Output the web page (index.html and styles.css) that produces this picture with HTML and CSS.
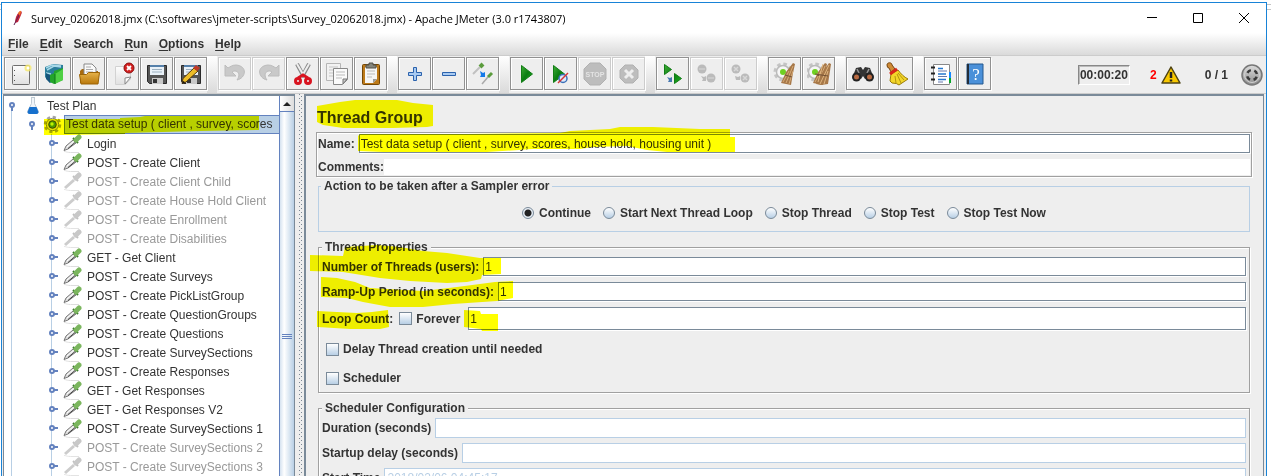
FILE: index.html
```html
<!DOCTYPE html>
<html lang="en">
<head>
<meta charset="utf-8">
<title>Apache JMeter</title>
<link rel="stylesheet" href="styles.css">
<script src="app.js" defer></script>
</head>
<body>
<svg class="defs" width="0" height="0" aria-hidden="true">
  <defs>
    <linearGradient id="green" x1="0" y1="0" x2="1" y2="1"><stop offset="0" stop-color="#3fae35"/><stop offset=".5" stop-color="#0a7d12"/><stop offset="1" stop-color="#1fae22"/></linearGradient>
    <linearGradient id="gold" x1="0" y1="0" x2="0" y2="1"><stop offset="0" stop-color="#e6b24a"/><stop offset="1" stop-color="#b9780b"/></linearGradient>
    <linearGradient id="paper" x1="0" y1="0" x2="0" y2="1"><stop offset="0" stop-color="#fdfdfd"/><stop offset="1" stop-color="#e0e0e0"/></linearGradient>
    <linearGradient id="silver" x1="0" y1="0" x2="0" y2="1"><stop offset="0" stop-color="#dedede"/><stop offset="1" stop-color="#8c8c8c"/></linearGradient>
    <symbol id="i-new" viewBox="0 0 24 24"><rect x="3.500" y="3.500" width="17" height="19" rx="1" fill="url(#paper)" stroke="#6f6f6f"/><path d="M5.500 8v1M5.500 13v1M5.500 18v1" stroke="#555"/><circle cx="19" cy="6" r="3.500" fill="#f6e96b" opacity=".8"/><circle cx="19" cy="6" r="1.500" fill="#fff"/></symbol>
    <symbol id="i-templates" viewBox="0 0 24 24"><path d="M2 5 10 2l10 1v13L7 21 2 15z" fill="#2b7d9b"/><path d="M3 6l6-3 9 1M4 8l7-4 7 1M3 11l5 1" stroke="#a8d8e8" fill="none" stroke-width="1.500"/><path d="M3 11l4 2v8l-4-4z" fill="#16547a"/><path d="M7 13l4-2v-2l9-3v12l-9 4-4-2z" fill="#23a52b"/><path d="M12 12l8-5v11l-8 4z" fill="#4fd044"/><path d="M12 12v10" stroke="#0d7416"/></symbol>
    <symbol id="i-open" viewBox="0 0 24 24"><path d="M3 9l2-2h5l1 2h10v12H3z" fill="#a86b10"/><path d="M7 14V2h8l4 4v8z" fill="#fafafa" stroke="#888"/><path d="M9 5h5M9 7.500h7M9 10h7" stroke="#aaa"/><path d="M2.500 12.500h7l2-2h11l-1.500 11.500h-17z" fill="url(#gold)" stroke="#9c6406"/></symbol>
    <symbol id="i-close" viewBox="0 0 24 24"><path d="M4.500 4.500h15V17l-5 5.500h-10z" fill="url(#paper)" stroke="#d2d2d2"/><path d="M20 15l-6 1v6z" fill="#fff" stroke="#888"/><circle cx="18" cy="6" r="5" fill="#d32020" stroke="#8c0d0d"/><path d="M16 4l4 4m0-4l-4 4" stroke="#fff" stroke-width="1.800"/></symbol>
    <symbol id="i-save" viewBox="0 0 24 24"><path d="M2.500 3.500h19v18h-17l-2-2z" fill="#555" stroke="#292929"/><path d="M5 3h14v10H5z" fill="#e9f1f8"/><path d="M5 3h14v2H5z" fill="#5580aa"/><path d="M7 7.500h10M7 10h10" stroke="#9db1c0"/><path d="M7 16h11v6H7z" fill="#c9c9c9"/><path d="M8 17h4v4H8z" fill="#333"/></symbol>
    <symbol id="i-saveas" viewBox="0 0 24 24"><use href="#i-save"/><path d="M3 21.500l1-5L15 6l4 3L7 20z" fill="#edbd28" stroke="#52360c"/><path d="M14 6l3-3 4 3-3 3z" fill="#be3828"/><path d="M3 22l1-3 2 1z" fill="#111"/></symbol>
    <symbol id="i-undo" viewBox="0 0 24 24"><path d="M2 3v11h11L9 10c4-3 10 1 5 8 9-2 11-14-1-15-4 0-6 2-8 3z" fill="#c9c9c9" stroke="#bcbcbc"/></symbol>
    <symbol id="i-redo" viewBox="0 0 24 24"><use href="#i-undo" transform="matrix(-1 0 0 1 24 0)"/></symbol>
    <symbol id="i-cut" viewBox="0 0 24 24"><path d="M6 2l7 13M18 2l-7 13" stroke="#888" stroke-width="4"/><path d="M6 2l7 12M18 2l-7 12" stroke="#eee" stroke-width="2"/><circle cx="7" cy="19" r="2.500" fill="none" stroke="#d91420" stroke-width="3"/><circle cx="17" cy="19" r="2.500" fill="none" stroke="#d91420" stroke-width="3"/><path d="M7 16l5-3 5 3" fill="none" stroke="#d91420" stroke-width="3"/></symbol>
    <symbol id="i-copy" viewBox="0 0 24 24"><path d="M1.500 1.500h14v17h-14z" fill="#f2f2f2" stroke="#b5b5b5"/><path d="M4 5h9M4 8h9M4 11h5M4 14h4" stroke="#c5c5c5"/><path d="M8.500 6.500h14v11l-5 5h-9z" fill="#fafafa" stroke="#888"/><path d="M11 10h9M11 13h9M11 16h6" stroke="#bbb"/><path d="M22 17h-4v5z" fill="#ccc" stroke="#777"/></symbol>
    <symbol id="i-paste" viewBox="0 0 24 24"><rect x="3.500" y="2.500" width="17" height="20" rx="1" fill="#bd7a19" stroke="#734607"/><path d="M6 5h12v12l-4 4H6z" fill="#f6f6f6"/><path d="M8 9h8M8 12h8M8 15h5" stroke="#bbb"/><path d="M14 21v-4h4z" fill="#999"/><path d="M7 6V3h3V1h4v2h3v3z" fill="#85857b" stroke="#50504b"/></symbol>
    <symbol id="i-plus" viewBox="0 0 24 24"><path d="M10.500 5.500h3v5h5v3h-5v5h-3v-5h-5v-3h5z" fill="#a9cbf2" stroke="#2b62ad"/></symbol>
    <symbol id="i-minus" viewBox="0 0 24 24"><path d="M5.500 10.500h13v3h-13z" fill="#a9cbf2" stroke="#2b62ad"/></symbol>
    <symbol id="i-toggle" viewBox="0 0 24 24"><path d="M2 12l7-7" stroke="#c0c0c0" stroke-width="2"/><path d="M9 5l3-3" stroke="#5b9c3d" stroke-width="4"/><path d="M11 22l6-7" stroke="#aaa" stroke-width="1.500"/><path d="M17 15l4-4" stroke="#5b9c3d" stroke-width="3"/><path d="M9 9l3 2 2-1v5H9l1-2z" fill="#167ae8"/></symbol>
    <symbol id="i-start" viewBox="0 0 24 24"><path d="M6.500 3.500v17L17.500 12z" fill="url(#green)" stroke="#127d16"/></symbol>
    <symbol id="i-nopause" viewBox="0 0 24 24"><path d="M4.500 3.500v17L15.500 12z" fill="url(#green)" stroke="#127d16"/><circle cx="14" cy="16.500" r="4" fill="#dde9fa" stroke="#3c70b8" stroke-width="1.500"/><path d="M9 21l10-10" stroke="#d43333" stroke-width="1.500"/></symbol>
    <symbol id="i-stop" viewBox="0 0 24 24"><path d="M7 1h10l6 6v10l-6 6H7l-6-6V7z" fill="#bdbdbd" stroke="#b1b1b1"/><text x="12" y="15" class="stop-word">STOP</text></symbol>
    <symbol id="i-shutdown" viewBox="0 0 24 24"><path d="M8 3h8l5 5v8l-5 5H8l-5-5V8z" fill="#bdbdbd" stroke="#b1b1b1"/><path d="M8 8l8 8m0-8l-8 8" stroke="#eee" stroke-width="3"/></symbol>
    <symbol id="i-rstart" viewBox="0 0 24 24"><path d="M3.500 2.500v10l7-5zM13.500 11.500v10l7-5z" fill="url(#green)" stroke="#127d16"/><path d="M6 15l3 1 2-1v5H7l1-2z" fill="#4779b1"/></symbol>
    <symbol id="i-rstop" viewBox="0 0 24 24"><circle cx="7" cy="7" r="4.500" fill="#bbb"/><circle cx="16" cy="16" r="4.500" fill="#bbb"/><path d="M4 7h6M13 16h6" stroke="#d0d0d0" stroke-width="1.500"/><path d="M6 14l3 1 2-1v5H7l1-2z" fill="#bbb"/></symbol>
    <symbol id="i-rshut" viewBox="0 0 24 24"><circle cx="7" cy="7" r="4.500" fill="#bbb"/><circle cx="16" cy="16" r="4.500" fill="#bbb"/><path d="M5 5l4 4m0-4l-4 4M14 14l4 4m0-4l-4 4" stroke="#d8d8d8" stroke-width="1.500"/><path d="M6 14l3 1 2-1v4H7z" fill="#bbb"/></symbol>
    <symbol id="i-clear" viewBox="0 0 24 24"><circle cx="10" cy="10" r="8" fill="none" stroke="#c4c4c4" stroke-width="3" stroke-dasharray="3.500 2.800"/><circle cx="10" cy="10" r="6.500" fill="#f6f6f6" stroke="#bbb" stroke-width="1.500"/><circle cx="10" cy="10" r="3" fill="#6fd022"/><path d="M20 1l2 1-2 9-2 12-10-2 5-11z" fill="#a77849"/><path d="M20 4l-7 17M20 9l-4 13M16 9l-6 11" stroke="#d6ab77"/><path d="M12 13l7 2" stroke="#735033"/></symbol>
    <symbol id="i-clearall" viewBox="0 0 24 24"><use href="#i-clear" x="-2"/><path d="M22 1l2 1-3 20-7 1-5-1 6-11z" fill="#a77849"/><path d="M22 3l-9 19M21 9l-4 13M16 2l-5 18" stroke="#dfb67f"/><path d="M8 12l13 2" stroke="#735033"/></symbol>
    <symbol id="i-search" viewBox="0 0 24 24"><path d="M2 14l3-8 5-1 2 3 2-3 5 1 3 8-8 3-2-3-2 3z" fill="#333"/><path d="M6 7l2 4M18 7l-2 4" stroke="#999" stroke-width="1.500"/><circle cx="5.500" cy="15" r="4.500" fill="#222"/><circle cx="18.500" cy="15" r="4.500" fill="#222"/><circle cx="5.500" cy="15" r="2.500" fill="#b86a42"/><circle cx="18.500" cy="15" r="2.500" fill="#b86a42"/></symbol>
    <symbol id="i-broom" viewBox="0 0 24 24"><path d="M2 3c0-3 5-3 5 0l3 4-4 3-2-4q-2 0-2-3z" fill="#cf8b36" stroke="#75440f"/><path d="M6 12l7-4c3 4 6 7 10 9l-9 6q-2-2-7-2l-2-2z" fill="#f3d629" stroke="#9a7b08"/><path d="M10 14l1 7M12 12l4 9M13 11l6 7" stroke="#b3950f"/><path d="M5 12l7-5" stroke="#d82519" stroke-width="3"/></symbol>
    <symbol id="i-helper" viewBox="0 0 24 24"><path d="M4.500 2.500h16v20h-16z" fill="#fff" stroke="#888"/><path d="M9 6.500h5M9 12h8M9 17.500h8" stroke="#2779cf" stroke-width="1.500"/><path d="M9 9h9M9 14.500h9M9 20h5" stroke="#67a"/><path d="M2 5.500h4M2 11.500h4M2 17.500h4" stroke="#222" stroke-width="2"/><path d="M21 10v6" stroke="#1688ff" stroke-width="2"/><path d="M21 16v5" stroke="#08a52a" stroke-width="2"/></symbol>
    <symbol id="i-help" viewBox="0 0 24 24"><path d="M4 2h16v20H4z" fill="#4a90d9" stroke="#24588e"/><path d="M4 2h2v20H4z" fill="#232d39"/><text x="13" y="18" class="help-mark">?</text></symbol>
    <symbol id="pipette" viewBox="0 0 19 19"><path d="M1 17.500c3 0 1 1 9 1h6" fill="none" stroke="#ddd"/><path d="M1 16.500L3 12l7-6 3 3-8 6z" fill="#ddd" stroke="#777"/><path d="M4 13l7-6" stroke="#fff"/><path d="M5 14.500l7-6" stroke="#444"/><path d="M10 4l5 5" stroke="#3a7a2c" stroke-width="2"/><path d="M13 6l3-3" stroke="#7bb65e" stroke-width="5" stroke-linecap="round"/></symbol>
    <symbol id="pipette-off" viewBox="0 0 19 19"><path d="M1 17.500c3 0 1 1 9 1h6" fill="none" stroke="#e3e3e3"/><path d="M2 16l9-8" stroke="#ccc" stroke-width="3"/><path d="M10 4l5 5" stroke="#c0c0c0" stroke-width="2"/><path d="M13 6l3-3" stroke="#c8c8c8" stroke-width="5" stroke-linecap="round"/></symbol>
    <symbol id="flask" viewBox="0 0 19 19"><path d="M7.500 1.500h3v6l4 8q0 2-2 2h-7q-2 0-2-2l4-8z" fill="#f1f5f9" stroke="#c2ccd5"/><path d="M5.500 11h7l2 5q0 2-2 2h-7q-2 0-2-2z" fill="#1670cd"/><path d="M7 1.500h4" stroke="#bcc8d1"/></symbol>
    <symbol id="gear" viewBox="0 0 19 19"><circle cx="9.500" cy="9.500" r="7.500" fill="none" stroke="#a5a5a5" stroke-width="2.500" stroke-dasharray="3.200 2.690"/><circle cx="9.500" cy="9.500" r="6.200" fill="#e0e0e0" stroke="#888"/><circle cx="9.500" cy="9.500" r="3.800" fill="#4a9a16" stroke="#444"/><circle cx="9" cy="9" r="1.700" fill="#c0f080"/></symbol>
  </defs>
</svg>

<div class="window">
  <header class="titlebar">
    <svg class="feather" viewBox="0 0 12 18" aria-hidden="true"><path d="M8 2q3 0 1 4L6 13l-3 1Q3 7 8 2z" fill="#c3223b"/><path d="M6 4q3-3 3-2L8 7z" fill="#f47a24"/><path d="M7 6L3 14l-1 2" stroke="#642051" fill="none"/></svg>
    <h1 class="title">Survey_02062018.jmx (C:\softwares\jmeter-scripts\Survey_02062018.jmx) - Apache JMeter (3.0 r1743807)</h1>
    <div class="caption">
      <button type="button" aria-label="Minimize"><svg viewBox="0 0 12 12"><path d="M1 5.500h10"/></svg></button>
      <button type="button" aria-label="Maximize"><svg viewBox="0 0 12 12"><path d="M1.500 1.500h9v9h-9z"/></svg></button>
      <button type="button" aria-label="Close"><svg viewBox="0 0 12 12"><path d="M1 1l10 10M11 1L1 11"/></svg></button>
    </div>
  </header>

  <nav class="menubar">
    <button type="button"><u>F</u>ile</button><button type="button"><u>E</u>dit</button><button type="button">Search</button><button type="button"><u>R</u>un</button><button type="button"><u>O</u>ptions</button><button type="button"><u>H</u>elp</button>
  </nav>

  <div class="toolbar">
    <div class="tools" id="tools"></div>
    <div class="status">
      <output class="timer">00:00:20</output>
      <button type="button" class="errors">2 <svg viewBox="0 0 20 18" aria-hidden="true"><path d="M10 1L1 17h18z" fill="#f8c800" stroke="#4d4212" stroke-width="1.500" stroke-linejoin="round"/><path d="M10 6v6" stroke="#222" stroke-width="2.500"/><path d="M10 13.500v2" stroke="#222" stroke-width="2.500"/></svg></button>
      <span class="threads">0 / 1</span>
      <svg class="ring" viewBox="0 0 22 22" aria-hidden="true"><circle cx="11" cy="11" r="10" fill="url(#silver)" stroke="#777" stroke-width="1.500"/><circle cx="11" cy="11" r="7.500" fill="none" stroke="#d0d0d0"/><circle cx="11" cy="11" r="5" fill="none" stroke="#3a3a3a" stroke-width="2.500" stroke-dasharray="4.200 3.654" stroke-dashoffset="-1.830"/></svg>
    </div>
  </div>

  <main class="split">
    <aside class="tree-pane">
      <ul class="tree" id="tree"></ul>
      <div class="scrollbar"><button type="button" aria-label="Scroll up"></button><div class="thumb"></div></div>
    </aside>
    <div class="divider"></div>
    <section class="editor">
      <h2 class="heading">Thread Group</h2>
      <div class="naming">
        <div class="line"><label for="name">Name:</label><input id="name" class="field" value="Test data setup ( client , survey, scores, house hold, housing unit )"></div>
        <div class="line comments"><label for="comments">Comments:</label><input id="comments"></div>
      </div>
      <fieldset class="group action">
        <legend>Action to be taken after a Sampler error</legend>
        <label><input type="radio" name="err" checked>Continue</label>
        <label><input type="radio" name="err">Start Next Thread Loop</label>
        <label><input type="radio" name="err">Stop Thread</label>
        <label><input type="radio" name="err">Stop Test</label>
        <label><input type="radio" name="err">Stop Test Now</label>
      </fieldset>
      <fieldset class="group etched">
        <legend>Thread Properties</legend>
        <div class="line"><label for="threads">Number of Threads (users):</label><input id="threads" class="field" value="1"></div>
        <div class="line"><label for="ramp">Ramp-Up Period (in seconds):</label><input id="ramp" class="field" value="1"></div>
        <div class="line loops"><label for="loops">Loop Count:</label><label class="check"><input type="checkbox">Forever</label><input id="loops" class="field" value="1"></div>
        <label class="check option"><input type="checkbox">Delay Thread creation until needed</label>
        <label class="check option"><input type="checkbox">Scheduler</label>
      </fieldset>
      <fieldset class="group etched schedule">
        <legend>Scheduler Configuration</legend>
        <div class="line"><label for="duration">Duration (seconds)</label><input id="duration" class="field" disabled></div>
        <div class="line"><label for="delay">Startup delay (seconds)</label><input id="delay" class="field" disabled></div>
        <div class="line"><label for="start">Start Time</label><input id="start" class="field" value="2018/02/06 04:45:17" disabled></div>
      </fieldset>
    </section>
  </main>
</div>

<svg class="marker" aria-hidden="true">
  <path d="M317 106L340 102 355 100 397 100 413 103 433 105 433 126 427 127 393 128 343 128 323 125 317 122z"/>
  <path d="M44 119L120 119 120 118 140 117 145 116 259 116 259 130 200 131 125 133 125 134 66 135 44 135z"/>
  <path d="M358 136L360 134 467 134 560 133 570 131 610 129 620 127 653 127 700 129 730 129 730 137 735 137 735 152 667 152 647 150 627 146 593 147 580 149 533 149 487 152 383 152 358 151z"/>
  <path d="M310 255L343 256 345 247 377 245 400 247 423 251 447 253 480 258 501 258 501 274 482 275 481 279 467 282 447 283 410 281 380 278 343 272 310 271z"/>
  <path d="M321 277L337 278 355 282 370 288 423 291 457 287 495 282 513 281 513 298 497 301 453 304 423 307 390 307 363 302 347 298 321 297z"/>
  <path d="M317 311L357 313 372 312 388 310 389 327 380 329 350 329 317 327z"/>
  <path d="M464 310L480 311 481 314 498 314 498 331 482 331 481 329 464 327z"/>
</svg>
</body>
</html>
```
FILE: styles.css
```css
* { box-sizing: border-box; }
body { margin: 0; background: linear-gradient(#c4c4c4, #c4c4c4) 0 4px / 100% 1px no-repeat, linear-gradient(#c4c4c4, #c4c4c4) 0 9px / 100% 1px no-repeat, #fff; color: #333; font: 12px "Liberation Sans", Arial, sans-serif; overflow: hidden; }
button, input { font: inherit; color: inherit; padding: 0; border: 0; margin: 0; background: none; border-radius: 0; }
h1, h2, ul, fieldset { margin: 0; padding: 0; border: 0; min-width: 0; }
.defs { position: absolute; }
.window { height: calc(100vh - 2px); margin: 2px 4px 0 1px; border: 1px solid #1883d7; border-bottom: 0; display: flex; flex-direction: column; background: #eee; }
.titlebar { display: flex; align-items: center; height: 30px; flex: none; background: #fff; padding: 0 10px; color: #000; }
.feather { width: 12px; height: 18px; margin-right: 7px; }
.title { font: 11px "Open Sans", "Noto Sans", sans-serif; flex: 1; white-space: nowrap; }
.caption { display: flex; gap: 34px; padding-right: 6px; }
.caption button { display: flex; }
.caption svg { width: 12px; height: 12px; fill: none; stroke: #000; }
.menubar { display: flex; gap: 11px; height: 23px; flex: none; padding: 0 6px; font-weight: bold; background: linear-gradient(#fff, #dadada); border-bottom: 1px solid #ccc; }
.menubar u { text-underline-offset: 2px; }

.toolbar { display: flex; height: 38px; flex: none; border-bottom: 1px solid #ccc; }
.tools { display: flex; gap: 10px; padding-left: 1px; background: linear-gradient(#fff, #dadada); }
.set { display: flex; gap: 1px; padding: 1px 0 1px 1px; background: #eee; }
.tool { width: 33px; height: 33px; border: 1px solid #919191; box-shadow: 1px 1px #fff, inset 1px 1px #fff; display: flex; align-items: center; justify-content: center; }
.tool:disabled { border-color: #ccc; }
.tool svg { width: 24px; height: 24px; }
.stop-word { font: bold 7px "Liberation Sans", sans-serif; fill: #e4e4e4; text-anchor: middle; }
.help-mark { font: 17px "Liberation Serif", serif; fill: #fff; text-anchor: middle; }
.status { display: flex; align-items: center; margin-left: auto; padding-right: 3px; font-weight: bold; }
.timer { border: 1px solid #888; border-right-color: #fff; border-bottom-color: #fff; box-shadow: inset 1px 1px #bbb; padding: 2px 1px; margin-right: 20px; }
.errors { display: flex; align-items: center; gap: 4px; color: #f00; margin-right: 24px; }
.errors svg { width: 20px; height: 18px; }
.ring { width: 22px; height: 22px; margin-left: 13px; }

.split { display: flex; flex: 1; min-height: 0; }
.tree-pane { display: flex; width: 292px; flex: none; margin-left: 1px; border: 2px solid #7a8a99; border-left-width: 1px; border-right-width: 1px; border-bottom: 0; background: #fff; overflow: hidden; }
.tree { list-style: none; flex: 1; overflow: hidden; background: linear-gradient(#b8cfe5, #b8cfe5) 7px 10px / 1px 100% no-repeat; }
.tree li { display: flex; align-items: center; height: 19px; white-space: nowrap; }
.tree li > svg { width: 19px; height: 19px; flex: none; }
.tree .name { padding: 1px 2px; margin-left: 3px; }
.tree .root { padding-left: 4px; }
.tree .group-row { padding-left: 24px; }
.tree .leaf { padding-left: 44px; background: linear-gradient(#b8cfe5, #b8cfe5) 47px 0 / 1px 100% no-repeat; }
.tree .off { color: #999; }
.tree .root .name { margin-left: 2px; }
.tree .picked { flex: 1; margin-left: 2px; padding: 1px 0 1px 1px; border: 1px solid #6382bf; border-right: 0; background: #b8cfe5; line-height: 15px; }
.handle { width: 10px; height: 10px; margin-right: 5px; flex: none; display: flex; }
.handle svg { width: 10px; height: 10px; }
.root .handle { margin-right: 6px; }
.scrollbar { width: 15px; flex: none; display: flex; flex-direction: column; border-left: 1px solid #6382bf; }
.scrollbar button { height: 16px; background: linear-gradient(90deg, #fff, #ddd); border-bottom: 1px solid #6382bf; display: flex; align-items: center; justify-content: center; }
.scrollbar button::before { content: ""; border: 4px solid transparent; border-top: 0; border-bottom-color: #222; }
.thumb { flex: 1; background: linear-gradient(#6382bf, #6382bf) 2px 222px / 10px 1px no-repeat, linear-gradient(#6382bf, #6382bf) 2px 224px / 10px 1px no-repeat, linear-gradient(#6382bf, #6382bf) 2px 226px / 10px 1px no-repeat, linear-gradient(90deg, #d5e2f0, #fff 30%, #b8cfe5); }
.divider { width: 9px; flex: none; background: conic-gradient(from 270deg at 1px 1px, #7a8794 90deg, transparent 0) 4px 0 / 9px 4px, conic-gradient(from 270deg at 1px 1px, #7a8794 90deg, transparent 0) 6px 2px / 9px 4px; }

.editor { flex: 1; min-width: 0; overflow: hidden; border: 2px solid #7a8a99; border-right-width: 1px; border-bottom: 0; margin-right: 2px; padding: 12px 11px 0 10px; font-weight: bold; }
.heading { font-size: 16px; line-height: 20px; margin-bottom: 4px; padding-left: 1px; }
.naming { border: 1px solid #a0a0a0; box-shadow: 1px 1px #fff, inset 1px 1px #fff; padding: 1px; }
.line { display: flex; align-items: center; gap: 4px; }
.line > input { flex: 1; min-width: 0; }
.field { height: 19px; border: 1px solid #7a8a99; background: #fff; font-weight: normal; padding: 0 1px; box-shadow: 1px 1px #fff; }
.field:disabled { height: 20px; border-color: #b8cfe5; color: #b8cfe5; padding-left: 2px; box-shadow: none; }
.comments { gap: 0; margin-top: 6px; }
.comments input { height: 16px; background: #fff; }
.group { margin: 0 2px; border: 1px solid #b8cfe5; }
.group legend { padding: 0 3px; line-height: 16px; margin-left: 2px; background: #eee; }
.action { display: flex; justify-content: center; gap: 12px; margin-top: 1px; padding: 11px 0 10px; }
.action label { display: flex; align-items: center; gap: 5px; line-height: 16px; }
.etched { border-color: #a0a0a0; box-shadow: 1px 1px #fff, inset 1px 1px #fff; padding: 2px 3px 0; margin-top: 7px; }
.etched legend { margin-left: 0; }
.etched .line { margin-bottom: 6px; }
.schedule { margin-top: 7px; }
.schedule .line { margin-bottom: 5px; }
input[type=radio], input[type=checkbox] { appearance: none; width: 12px; height: 12px; border: 1px solid #7a8a99; background: linear-gradient(#fff, #b8cfe5); }
input[type=radio] { border-radius: 50%; }
input[type=radio]:checked { background: radial-gradient(circle, #222 3px, #e8eff7 4px); }
input[type=checkbox] { width: 13px; height: 13px; }
.check { display: flex; align-items: center; gap: 4px; }
.loops .check { margin: 0 4px 0 2px; }
.loops .field { height: 23px; }
.option { line-height: 17px; margin: 11px 4px 12px; }
.option:last-child { margin-bottom: 5px; }
.marker { position: absolute; inset: 0; width: 100%; height: 100%; fill: #ff0; mix-blend-mode: multiply; pointer-events: none; }
```
FILE: app.js
```js
const icon = (id) => `<svg aria-hidden="true"><use href="#${id}"/></svg>`;

const sets = [
  ["new New", "templates Templates", "open Open", "close Close", "save Save", "saveas Save as"],
  ["undo Undo -", "redo Redo -", "cut Cut", "copy Copy", "paste Paste"],
  ["plus Expand", "minus Collapse", "toggle Toggle"],
  ["start Start", "nopause Start no pauses", "stop Stop -", "shutdown Shutdown -"],
  ["rstart Remote start", "rstop Remote stop -", "rshut Remote shutdown -"],
  ["clear Clear", "clearall Clear all"],
  ["search Search", "broom Reset search"],
  ["helper Function helper", "help Help"],
];
document.getElementById("tools").innerHTML = sets.map((set) =>
  `<div class="set">${set.map((entry) => {
    const off = entry.endsWith(" -");
    const [id, ...words] = entry.replace(/ -$/, "").split(" ");
    return `<button type="button" class="tool" aria-label="${words.join(" ")}"${off ? " disabled" : ""}>${icon("i-" + id)}</button>`;
  }).join("")}</div>`).join("");

const samplers = [
  "Login", "POST - Create Client", "-POST - Create Client Child", "-POST - Create House Hold Client",
  "-POST - Create Enrollment", "-POST - Create Disabilities", "GET - Get Client", "POST - Create Surveys",
  "POST - Create PickListGroup", "POST - Create QuestionGroups", "POST - Create Questions",
  "POST - Create SurveySections", "POST - Create Responses", "GET - Get Responses", "GET - Get Responses V2",
  "POST - Create SurveySections 1", "-POST - Create SurveySections 2", "-POST - Create SurveySections 3",
];
const handle = (open) => `<button type="button" class="handle" aria-label="${open ? "Collapse" : "Expand"}">
  <svg viewBox="0 0 10 10"><circle cx="4" cy="4" r="2" fill="#fff" stroke="#6382bf" stroke-width="2"/><path d="${open ? "M4 6v4" : "M6 4h4"}" stroke="#6382bf" stroke-width="2"/></svg></button>`;
document.getElementById("tree").innerHTML =
  `<li class="root">${handle(true)}${icon("flask")}<span class="name">Test Plan</span></li>
   <li class="group-row">${handle(true)}${icon("gear")}<span class="name picked">Test data setup ( client , survey, scores</span></li>` +
  samplers.map((text) => {
    const off = text[0] === "-";
    return `<li class="leaf${off ? " off" : ""}">${handle(false)}${icon(off ? "pipette-off" : "pipette")}<span class="name">${off ? text.slice(1) : text}</span></li>`;
  }).join("");
```
